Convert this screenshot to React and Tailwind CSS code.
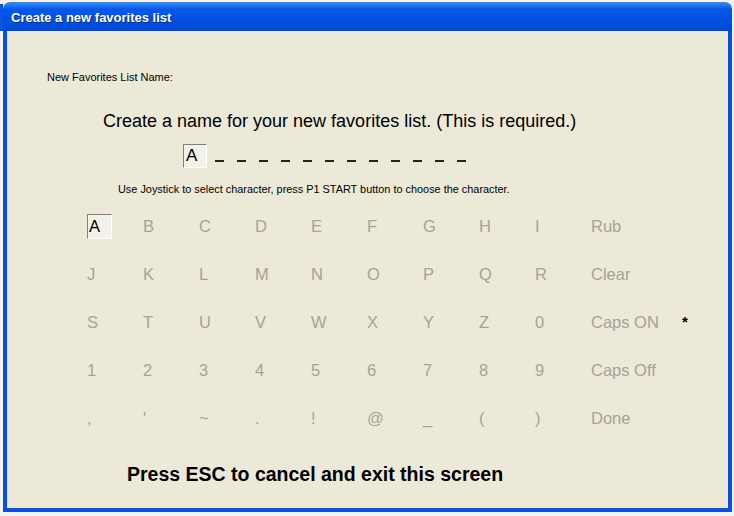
import React from 'react';

const rows = [
    ['A', 'B', 'C', 'D', 'E', 'F', 'G', 'H', 'I', 'Rub'],
    ['J', 'K', 'L', 'M', 'N', 'O', 'P', 'Q', 'R', 'Clear'],
    ['S', 'T', 'U', 'V', 'W', 'X', 'Y', 'Z', '0', 'Caps ON'],
    ['1', '2', '3', '4', '5', '6', '7', '8', '9', 'Caps Off'],
    [',', "'", '~', '.', '!', '@', '_', '(', ')', 'Done'],
];

const Key = ({ label, selected, wide }) => (
    <div className={`${wide ? 'w-[91px]' : 'w-[56px]'} h-[48px] flex items-center`}>
        {selected ? (
            <div className="w-[25px] h-[25px] flex items-center pl-[1px] border border-t-[#808080] border-l-[#808080] border-b-white border-r-white bg-[#f3f1e9] text-black">
                {label}
            </div>
        ) : (
            <span className="text-[#a6a396]">{label}</span>
        )}
    </div>
);

const App = () => {
    return (
        <div className="relative w-[734px] h-[516px] overflow-hidden bg-[#f4f3ee] pl-[3px] pt-[2px] font-['Liberation_Sans',Arial,sans-serif]">
            {/* window sitting behind, only its edge is visible */}
            <div className="absolute left-0 top-[4px] w-[3px] h-[27px] bg-[#0a56e4]"></div>

            <div className="relative w-[729px] h-[510px] flex flex-col">
                <div className="h-[29px] rounded-t-[7px] bg-linear-to-b from-[#3a8cf8] via-[#0458e8] via-25% to-[#0049d8] flex items-center pl-[8px] pt-[3px]">
                    <span className="text-white font-bold text-[13px] [text-shadow:1px_1px_0_#0a2a8a]">
                        Create a new favorites list
                    </span>
                </div>

                <div className="flex-1 border-x-4 border-b-4 border-[#0a4ee2] bg-[#ece9d8] flex flex-col">
                    <div className="mt-[33px] h-[26px] flex items-center pl-[40px] text-[11px] text-black">
                        New Favorites List Name:
                    </div>

                    <div className="mt-[18px] h-[26px] flex items-center pl-[96px] text-[18px] text-black">
                        Create a name for your new favorites list. (This is required.)
                    </div>

                    <div className="mt-[10px] h-[24px] flex items-center pl-[176px]">
                        <div className="w-[24px] h-[24px] border border-t-[#808080] border-l-[#808080] border-b-white border-r-white bg-[#f3f1e9] flex items-center pl-[2px] text-[17px] text-black">
                            A
                        </div>
                        <div className="flex gap-[13px] ml-[8px] self-end mb-[6px]">
                            {Array.from({ length: 12 }).map((_, i) => (
                                <span key={i} className="block w-[9px] h-[2px] bg-[#222]"></span>
                            ))}
                        </div>
                    </div>

                    <div className="mt-[12px] h-[18px] flex items-center pl-[111px] text-[10.9px] text-black">
                        Use Joystick to select character, press P1 START button to choose the character.
                    </div>

                    <div className="mt-[4px] pl-[80px] flex flex-col text-[16.5px]">
                        {rows.map((row, r) => (
                            <div key={r} className="flex items-center">
                                {row.map((label, c) => (
                                    <Key key={c} label={label} selected={r === 0 && c === 0} wide={c === 9} />
                                ))}
                                {r === 2 && <span className="text-black font-bold text-[15px]">*</span>}
                            </div>
                        ))}
                    </div>

                    <div className="mt-[20px] h-[26px] flex items-center pl-[120px] text-[19.5px] font-bold text-black">
                        Press ESC to cancel and exit this screen
                    </div>
                </div>
            </div>
        </div>
    );
};

export default App;
